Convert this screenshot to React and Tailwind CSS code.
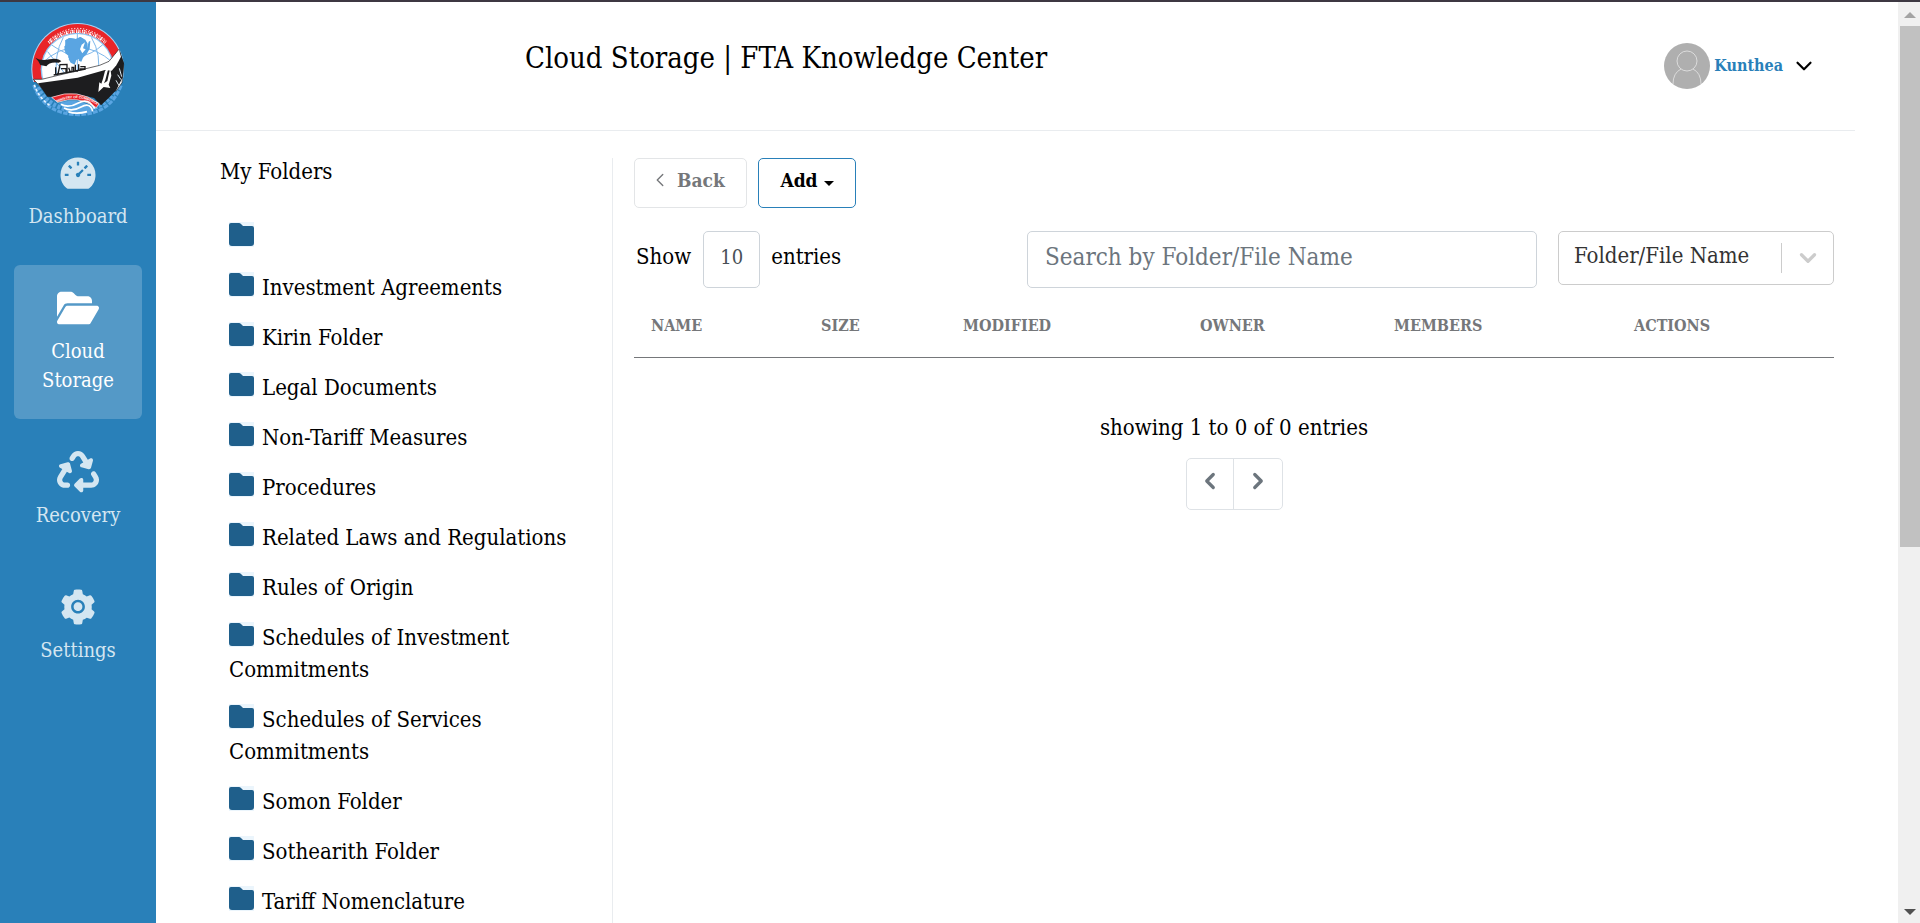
import { AiFillDashboard, AiFillSetting } from "react-icons/ai";
import { FaFolderOpen, FaRecycle } from "react-icons/fa6";
import { FiChevronDown, FiChevronLeft, FiChevronRight } from "react-icons/fi";

const folders = [
  "",
  "Investment Agreements",
  "Kirin Folder",
  "Legal Documents",
  "Non-Tariff Measures",
  "Procedures",
  "Related Laws and Regulations",
  "Rules of Origin",
  "Schedules of Investment Commitments",
  "Schedules of Services Commitments",
  "Somon Folder",
  "Sothearith Folder",
  "Tariff Nomenclature",
];

const columns = [
  ["Name", "w-[170px]"],
  ["Size", "w-[142px]"],
  ["Modified", "w-[237px]"],
  ["Owner", "w-[194px]"],
  ["Members", "w-[240px]"],
  ["Actions", ""],
];

function Logo() {
  return (
    <svg viewBox="96 69 282 282" className="h-[94px] w-[94px]" role="img" aria-label="Ministry of Commerce">
      <defs>
        <path id="ribbonText" d="M174 307 Q236 279 292 313" />
        <clipPath id="globe"><circle cx="235" cy="208" r="107" /></clipPath>
        <clipPath id="upper"><rect x="90" y="60" width="300" height="186" /></clipPath>
      </defs>
      <path d="M104 256 Q136 343 238 344 Q336 343 368 252" fill="none" stroke="#5aa5e2" strokeWidth="9" strokeDasharray="14 4" />
      <path d="M116 262 Q150 330 238 331 Q322 330 354 258" fill="none" stroke="#5aa5e2" strokeWidth="14" strokeDasharray="9 5" />
      <path d="M106 254 Q116 290 152 316" fill="none" stroke="#e8f4ff" strokeWidth="5" strokeDasharray="8 6" />
      <g clipPath="url(#upper)">
        <circle cx="236" cy="208" r="139" fill="#a9d3f5" />
        <circle cx="236" cy="208" r="136" fill="#e92428" />
        <circle cx="235" cy="208" r="110" fill="#8cc4f2" />
        <circle cx="235" cy="208" r="106" fill="#fff" />
      </g>
      <g clipPath="url(#globe)">
        <path d="M235 100V240M128 190Q180 142 235 142T342 188M158 135Q205 168 240 168T316 130M193 112Q164 164 174 232M277 112Q308 164 296 225M146 155L205 230" fill="none" stroke="#7db7ea" strokeWidth="3" />
      </g>
      <path d="M199 121l12-7 20 3 13-6 15 8 7 12-2 14 5-20 5-3-2 24-9 16-11 11-5 12-8-3 1-13-10 4-5 14-12-6-6-10 3-8-13-10-1-14 6-4z" fill="#5aa5e2" />
      <path d="M199 121l12-7 20 3 13-6 9 5-10 18-4 16 6 20-3 6-10 4-5 14-12-6-6-10 3-8-13-10-1-14z" fill="#5aa5e2" />
      <path d="M248 134l10-7-6 18 8 3-10 12-7-12z" fill="#fff" />
      <path d="M149 128Q235 60 320 127" fill="none" stroke="#fff" strokeWidth="10" strokeDasharray="3 2 6 2 2 3" />
      <path d="M152 118Q235 52 318 118" fill="none" stroke="#fff" strokeWidth="3" strokeDasharray="4 5" />
      <path d="M151 126Q235 60 320 125" fill="none" stroke="#e92428" strokeWidth="2" strokeDasharray="7 3" />
      <path d="M103 238L128 238 302 196 330 184 360 148 374 194 369 248 353 271 295 286 130 266 Z" fill="#fff" stroke="#1d1d1f" strokeWidth="2" />
      <path d="M117 250L236 233 318 210 337 206 357 180 362 153 375 190 371 232 352 270 329 294 306 316 285 294 235 282 160 291 145 290 Z" fill="#1d1d1f" />
      <path d="M318 210L330 188 360 150 366 170 352 196 338 212 Z" fill="#fff" />
      <path d="M109 173Q125 184 151 178T187 184L179 188Q151 184 142 199L124 195 118 184Z" fill="#1d1d1f" />
      <path d="M170 202V225M177 222L183 194 204 193V218M186 206H201V220M209 203L214 216M209 215H224V202H219V214M229 194V213H237M239 193V211M244 200H258V207H242M164 225L260 207" fill="none" stroke="#1d1d1f" strokeWidth="4" />
      <path d="M334 204l3 23-8 27 5 10-20-3-16 15 3-29 6 4 5-15 6-23 11-11-10 38-4 10 10-7 8-36z" fill="#fff" />
      <path d="M361 205L368 230M356 224L366 239M351 241L360 257" stroke="#d9e6ef" strokeWidth="3" />
      <path d="M158 292Q236 262 300 311L292 323Q236 284 176 307Z" fill="#e92428" stroke="#fff" strokeWidth="2" />
      <text fontFamily="Liberation Sans, sans-serif" fontSize="10" fontWeight="700" fill="#fff">
        <textPath href="#ribbonText">MINISTRY OF COMMERCE</textPath>
      </text>
      <path d="M180 309Q236 289 288 326L276 337Q240 349 203 335Z" fill="#5aa5e2" />
      <path d="M186 313Q208 326 238 309T287 326M195 324Q218 337 246 321T281 334M208 335Q232 344 264 335" fill="none" stroke="#fff" strokeWidth="5" />
    </svg>
  );
}

function FolderIcon() {
  return (
    <svg viewBox="0 0 25 25" className="mr-2 inline-block h-[25px] w-[25px] align-[-2px]" aria-hidden="true">
      <path d="M0 0H25V25H0Z" fill="#ebf5fc" />
      <path d="M2 1H10Q11 1 12 2L14 4H23Q25 4 25 6V21Q25 24 22 24H3Q0 24 0 21V3Q0 1 2 1Z" fill="#1f5f8b" />
    </svg>
  );
}

function NavItem({ icon: Icon, label, active, size }) {
  return (
    <a
      href="#"
      aria-current={active ? "page" : undefined}
      className={
        "flex w-32 flex-col items-center gap-2 rounded-md text-center text-[20px] leading-[29px] pt-[21px] pb-6 " +
        (active ? "bg-[#5499c7] px-4 text-white" : "text-[#d4e6f1]")
      }
    >
      <span className="flex h-[43px] items-center">
        <Icon className={size} />
      </span>
      {label}
    </a>
  );
}

function ScrollBar() {
  return (
    <div className="flex w-[22px] shrink-0 flex-col items-end bg-[#f0f0f0]" aria-hidden="true">
      <svg viewBox="0 0 20 24" className="h-6 w-5"><path d="M4 16L10 10 16 16Z" fill="#a3a3a3" /></svg>
      <div className="h-[521px] w-5 bg-[#c1c1c1]" />
      <svg viewBox="0 0 20 24" className="mt-auto h-6 w-5"><path d="M4 10L10 16 16 10Z" fill="#505050" /></svg>
    </div>
  );
}

export default function App() {
  return (
    <div className="flex h-screen overflow-hidden border-t-2 border-[#3d3842] bg-white font-['DejaVu_Serif_Condensed','DejaVu_Serif',serif] text-[22px] text-black">
      <nav className="flex w-[156px] shrink-0 flex-col items-center bg-[#2980b9] pt-[21px]" aria-label="Main">
        <Logo />
        <div className="mt-[13px] flex flex-col gap-[10px]">
          <NavItem icon={AiFillDashboard} label="Dashboard" size="h-10 w-10" />
          <NavItem icon={FaFolderOpen} label="Cloud Storage" active size="h-[42px] w-[42px]" />
          <NavItem icon={FaRecycle} label="Recovery" size="h-[42px] w-[42px]" />
          <NavItem icon={AiFillSetting} label="Settings" size="h-10 w-10" />
        </div>
      </nav>

      <div className="flex min-w-0 flex-1 flex-col pr-[43px]">
        <header className="flex h-[129px] shrink-0 items-start justify-between border-b border-[#e9ecef] pl-[369px] pr-[38px]">
          <h1 className="pt-9 text-[29px] leading-10">Cloud Storage | FTA Knowledge Center</h1>
          <button type="button" className="flex items-center pt-[41px]">
            <svg viewBox="0 0 46 46" className="mr-1 h-[46px] w-[46px]" aria-hidden="true">
              <circle cx="23" cy="23" r="23" fill="#afafaf" />
              <g fill="none" stroke="#dcdcdc">
                <circle cx="23" cy="18" r="10" />
                <path d="M17 26Q9 30 9 41M29 26Q37 30 37 41" />
              </g>
            </svg>
            <span className="text-[16px] font-bold text-[#2980b9]">Kunthea</span>
            <FiChevronDown className="ml-2 h-[26px] w-[26px]" />
          </button>
        </header>

        <div className="flex min-h-0 flex-1 items-stretch pr-[21px] pt-[27px]">
          <section className="w-[457px] shrink-0 border-r border-[#e9ecef] pl-16">
            <h2 className="leading-7">My Folders</h2>
            <ul className="mt-7 pl-[9px] pr-7">
              {folders.map((name) => (
                <li key={name} className="pt-2 pb-[10px] leading-8">
                  <a href="#" aria-label={name || "Untitled folder"}>
                    <FolderIcon />
                    {name}
                  </a>
                </li>
              ))}
            </ul>
          </section>

          <main className="min-w-0 flex-1 pl-[21px]">
            <div className="flex gap-[11px] text-[19px] font-bold leading-6">
              <button type="button" className="flex h-[50px] w-[113px] items-start gap-[6px] rounded-[5px] border border-[#e3e5e7] pl-[14px] pt-[9px] text-[#75777a]">
                <FiChevronLeft className="h-6 w-[22px]" strokeWidth={1.5} />
                <span>Back</span>
              </button>
              <button type="button" className="flex h-[50px] w-[98px] items-start justify-center gap-[6px] rounded-[5px] border border-[#2980b9] pt-[9px]">
                <span>Add</span>
                <svg viewBox="0 0 10 24" className="h-6 w-[10px]" aria-hidden="true"><path d="M0 13H10L5 18Z" /></svg>
              </button>
            </div>

            <div className="mt-[23px] flex items-start">
              <label htmlFor="count" className="pl-[2px] leading-[52px]">Show</label>
              <input id="count" defaultValue="10" className="ml-3 h-[57px] w-[57px] rounded-[5px] border border-[#ced4da] pb-[6px] text-center text-[20px] text-[#495057]" />
              <span className="ml-[11px] leading-[52px]">entries</span>
              <input
                aria-label="Search by Folder/File Name"
                placeholder="Search by Folder/File Name"
                className="ml-auto h-[57px] w-[510px] rounded-[5px] border border-[#ced4da] px-[17px] pb-[6px] text-[24px] placeholder:text-[#6c757d]"
              />
              <div className="relative ml-[21px] w-[276px]">
                <select aria-label="Search field" className="h-[54px] w-full appearance-none rounded-[5px] border border-[#cccccc] bg-white pb-[6px] pl-[15px] text-[#333333]">
                  <option>Folder/File Name</option>
                </select>
                <span className="pointer-events-none absolute inset-y-3 right-0 flex w-[53px] items-center justify-center border-l border-[#cccccc] text-[#cccccc]">
                  <FiChevronDown className="h-[26px] w-[26px]" strokeWidth={3} />
                </span>
              </div>
            </div>

            <table className="mt-4 w-full table-fixed border-collapse">
              <thead>
                <tr className="border-b border-[#75777a]">
                  {columns.map(([name, width]) => (
                    <th key={name} scope="col" className={"h-[53px] pb-[9px] pl-[17px] text-left text-[16px] font-bold uppercase text-[#75777a] " + width}>{name}</th>
                  ))}
                </tr>
              </thead>
            </table>

            <div className="mt-[54px] flex flex-col items-center">
              <p className="leading-8">showing 1 to 0 of 0 entries</p>
              <div className="mt-[14px] flex rounded-[5px] border border-[#dee2e6] text-[#6c757d]">
                <button type="button" aria-label="Previous page" className="flex h-[50px] w-[47px] items-start justify-center border-r border-[#dee2e6] pt-[9px]">
                  <FiChevronLeft className="h-[26px] w-[26px]" strokeWidth={3} />
                </button>
                <button type="button" aria-label="Next page" className="flex h-[50px] w-12 items-start justify-center pt-[9px]">
                  <FiChevronRight className="h-[26px] w-[26px]" strokeWidth={3} />
                </button>
              </div>
            </div>
          </main>
        </div>
      </div>
      <ScrollBar />
    </div>
  );
}
